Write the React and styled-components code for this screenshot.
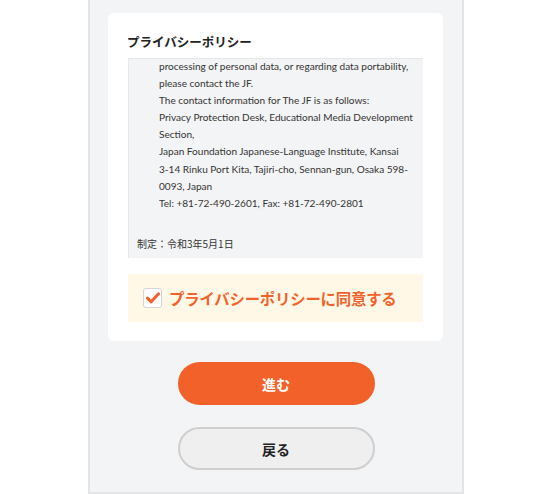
import React from "react";
import styled, { createGlobalStyle } from "styled-components";

const Global = createGlobalStyle`
  html, body { margin: 0; padding: 0; background: #fff; }
  body { font-family: "Noto Sans", "Noto Sans CJK JP", sans-serif; }
`;

const Frame = styled.div`
  margin-left: 88px;
  width: 376px;
  height: 494px;
  box-sizing: border-box;
  background: #f3f4f5;
  border: 2px solid #e4e5e6;
  border-top: none;
  padding: 13px 19px 0 18px;
  display: flex;
  flex-direction: column;
  align-items: stretch;
`;

const Card = styled.section`
  background: #fff;
  border-radius: 6px;
  padding: 22px 20px 19px 20px;
  display: flex;
  flex-direction: column;
`;

const Title = styled.h2`
  margin: 0 0 9px -1px;
  font-family: "Noto Sans CJK JP", sans-serif;
  font-size: 12.5px;
  font-weight: 700;
  color: #222;
  line-height: 14px;
`;

const ScrollBox = styled.div`
  background: #f3f4f5;
  border-left: 1px solid #e6e7e8;
  border-top: 1px solid #e6e7e8;
  height: 200px;
  overflow: hidden;
  padding: 0 8px 0 8px;
  box-sizing: border-box;
  font-family: Lato, "Noto Sans CJK JP", sans-serif;
  font-size: 10.05px;
  color: #333;
  line-height: 17.1px;
`;

const Indented = styled.div`
  padding-left: 22px;
  margin-top: -1px;
`;

const Line = styled.div`
  white-space: nowrap;
`;

const Enacted = styled.div`
  margin-top: 23px;
  font-family: "Noto Sans CJK JP", sans-serif;
  font-size: 10px;
`;

const AgreeBox = styled.label`
  margin-top: 16px;
  height: 48px;
  background: #fff8e6;
  display: flex;
  align-items: center;
  gap: 7px;
  padding-left: 15px;
  cursor: pointer;
`;

const CheckBox = styled.span`
  width: 17px;
  height: 18px;
  border: 1px solid #d5d5d5;
  border-radius: 3px;
  background: #fff;
  display: flex;
  align-items: center;
  justify-content: center;
`;

const AgreeText = styled.span`
  font-family: "Noto Sans CJK JP", sans-serif;
  font-weight: 700;
  font-size: 15.4px;
  color: #f2632b;
  letter-spacing: -0.2px;
`;

const Buttons = styled.div`
  margin-top: 21px;
  display: flex;
  flex-direction: column;
  align-items: center;
  gap: 22px;
  padding-left: 1px;
`;

const Button = styled.button`
  width: 197px;
  height: 43px;
  border-radius: 22px;
  font-family: "Noto Sans CJK JP", sans-serif;
  font-weight: 700;
  font-size: 14px;
  cursor: pointer;
  background: ${(p) => (p.$primary ? "#f2612a" : "#efefef")};
  color: ${(p) => (p.$primary ? "#fff" : "#222")};
  border: ${(p) => (p.$primary ? "none" : "2px solid #cfcfcf")};
`;

export default function App() {
  return (
    <>
      <Global />
      <Frame>
        <Card>
          <Title>プライバシーポリシー</Title>
          <ScrollBox>
            <Indented>
              <Line>processing of personal data, or regarding data portability,</Line>
              <Line>please contact the JF.</Line>
              <Line>The contact information for The JF is as follows:</Line>
              <Line>Privacy Protection Desk, Educational Media Development</Line>
              <Line>Section,</Line>
              <Line>Japan Foundation Japanese-Language Institute, Kansai</Line>
              <Line>3-14 Rinku Port Kita, Tajiri-cho, Sennan-gun, Osaka 598-</Line>
              <Line>0093, Japan</Line>
              <Line>Tel: +81-72-490-2601, Fax: +81-72-490-2801</Line>
            </Indented>
            <Enacted>制定：令和3年5月1日</Enacted>
          </ScrollBox>
          <AgreeBox>
            <CheckBox>
              <svg width="14" height="12" viewBox="0 0 14 12">
                <path d="M1.5 6.2 L5.2 9.8 L12.5 1.8" fill="none" stroke="#f2612a" strokeWidth="3" strokeLinecap="round" strokeLinejoin="round" />
              </svg>
            </CheckBox>
            <AgreeText>プライバシーポリシーに同意する</AgreeText>
          </AgreeBox>
        </Card>
        <Buttons>
          <Button $primary>進む</Button>
          <Button>戻る</Button>
        </Buttons>
      </Frame>
    </>
  );
}
